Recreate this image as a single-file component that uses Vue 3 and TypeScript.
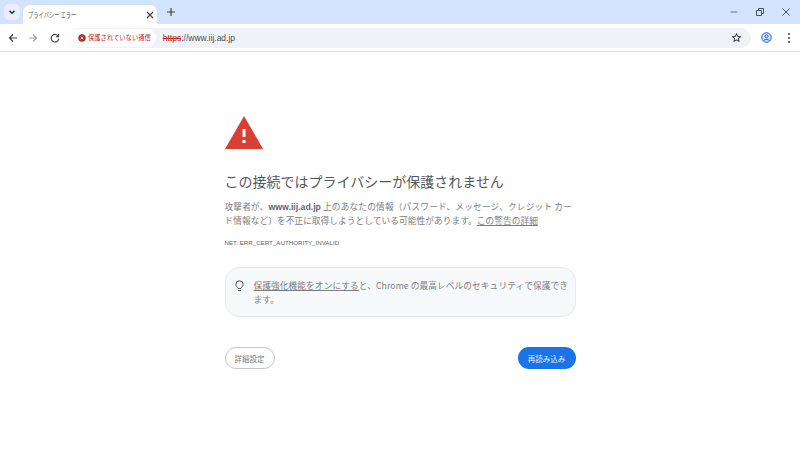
<script setup lang="ts">
const title = 'プライバシー エラー'
const url = 'www.iij.ad.jp'
</script>

<template>
  <div class="window">
    <header class="tabstrip">
      <button class="tab-search">
        <svg width="8" height="8" viewBox="0 0 8 8"><path d="M1.500 2.800 4 5.300 6.500 2.800" fill="none" stroke="#1f2937" stroke-width="1.300" /></svg>
      </button>
      <div class="tab">
        <span class="tab-title">{{ title }}</span>
        <svg class="tab-close" width="8" height="8" viewBox="0 0 8 8"><path d="M1 1 7 7M7 1 1 7" stroke="#3c4043" stroke-width="1.200" /></svg>
      </div>
      <svg class="new-tab" width="10" height="10" viewBox="0 0 10 10"><path d="M5 1v8M1 5h8" stroke="#3c4043" stroke-width="1.200" /></svg>
      <div class="win-controls">
        <svg width="10" height="10" viewBox="0 0 10 10"><path d="M1.500 5h7" stroke="#6b7280" stroke-width="1" /></svg>
        <svg width="10" height="10" viewBox="0 0 10 10"><path d="M1.500 3.500h5v5h-5zM3.500 3.500v-2h5v5h-2" fill="none" stroke="#4b5563" stroke-width="1" /></svg>
        <svg width="10" height="10" viewBox="0 0 10 10"><path d="M1.500 1.500l7 7M8.500 1.500l-7 7" stroke="#4b5563" stroke-width="1" /></svg>
      </div>
    </header>

    <nav class="toolbar">
      <svg class="nav-icon back" width="10" height="10" viewBox="0 0 10 10"><path d="M9 5H1.500M5 1.500 1.500 5 5 8.500" fill="none" stroke="#3c4043" stroke-width="1.200" /></svg>
      <svg class="nav-icon" width="10" height="10" viewBox="0 0 10 10"><path d="M1 5h7.500M5 1.500 8.500 5 5 8.500" fill="none" stroke="#9aa0a6" stroke-width="1.200" /></svg>
      <svg class="nav-icon" width="10" height="10" viewBox="0 0 10 10"><path d="M8.300 3.300A3.800 3.800 0 1 0 8.800 5.500M8.600 1v2.700H5.900" fill="none" stroke="#3c4043" stroke-width="1.100" /></svg>
      <div class="omnibox">
        <div class="chip">
          <svg width="8" height="8" viewBox="0 0 8 8"><circle cx="4" cy="4" r="3.700" fill="#b3261e" /><path d="M2.600 2.600l2.800 2.800M5.400 2.600 2.600 5.400" stroke="#fff" stroke-width=".9" /></svg>
          <span>保護されていない通信</span>
        </div>
        <div class="url"><s class="scheme">https</s><span class="rest">://{{ url }}</span></div>
        <svg class="star" width="11" height="11" viewBox="0 0 24 24"><path d="M12 3.500l2.600 5.700 6.200.7-4.600 4.200 1.300 6.100L12 17.200l-5.500 3 1.300-6.100-4.600-4.200 6.200-.7z" fill="none" stroke="#3c4043" stroke-width="2.200" stroke-linejoin="round" /></svg>
      </div>
      <svg class="profile" width="11" height="11" viewBox="0 0 12 12"><circle cx="6" cy="6" r="5.200" fill="#d3e3fd" stroke="#0b57d0" stroke-width="1" /><circle cx="6" cy="4.700" r="1.700" fill="none" stroke="#0b57d0" stroke-width="1" /><path d="M2.800 9.400C4 7.700 8 7.700 9.200 9.400" fill="none" stroke="#0b57d0" stroke-width="1" /></svg>
      <svg class="menu" width="4" height="12" viewBox="0 0 4 12"><circle cx="2" cy="2" r="1" fill="#3c4043" /><circle cx="2" cy="6" r="1" fill="#3c4043" /><circle cx="2" cy="10" r="1" fill="#3c4043" /></svg>
    </nav>

    <main class="page">
      <div class="content">
        <svg class="warn" width="38" height="33" viewBox="0 0 38 33">
          <path d="M19 0 38 33H0z" fill="#d93f33" />
          <rect x="17.500" y="13" width="3" height="8" fill="#fff" />
          <rect x="17.500" y="24" width="3" height="3" fill="#fff" />
        </svg>
        <h1>この接続ではプライバシーが保護されません</h1>
        <p class="body"><span class="first">攻撃者が、<b>www.iij.ad.jp</b> 上のあなたの情報（パスワード、メッセージ、クレジット カー</span><br />ド情報など）を不正に取得しようとしている可能性があります。<u>この警告の詳細</u></p>
        <p class="code">NET::ERR_CERT_AUTHORITY_INVALID</p>
        <div class="promo">
          <svg class="bulb" width="9" height="12" viewBox="0 0 10 13"><path d="M3.300 9.200C3.200 8 1 7.200 1 4.700a4 4 0 0 1 8 0c0 2.500-2.200 3.300-2.300 4.500z" fill="none" stroke="#3c4043" stroke-width="1" /><path d="M3.300 11.500h3.400" stroke="#3c4043" stroke-width="1" /></svg>
          <p><u>保護強化機能をオンにする</u>と、Chrome の最高レベルのセキュリティで保護できます。</p>
        </div>
        <div class="actions">
          <button class="btn-outline">詳細設定</button>
          <button class="btn-primary">再読み込み</button>
        </div>
      </div>
    </main>
  </div>
</template>

<style>
html, body { margin: 0; background: #fff; }
</style>

<style scoped>
.window { width: 800px; height: 449px; display: flex; flex-direction: column; overflow: hidden; font-family: "Noto Sans CJK JP", "Liberation Sans", sans-serif; background: #fff; }
.tabstrip { height: 24px; flex: none; background: #d3e3fd; display: flex; align-items: flex-end; padding-left: 4px; box-sizing: border-box; }
.tab-search { width: 16px; height: 16px; margin: 0 3px 4px 0; padding: 0; border: 0; border-radius: 5px; background: #e8effb; display: flex; align-items: center; justify-content: center; }
.tab { width: 134px; height: 19px; box-sizing: border-box; padding: 0 3px 0 5px; background: #fff; border-radius: 7px 7px 0 0; display: flex; align-items: center; justify-content: space-between; }
.tab-title { display: inline-block; font-size: 7.500px; color: #55585c; white-space: nowrap; transform: scaleX(.7); transform-origin: left center; }
.new-tab { margin: 0 0 7px 9px; }
.win-controls { margin-left: auto; align-self: stretch; display: flex; align-items: center; gap: 16px; padding: 0 9px 0 0; height: 24px; }
.toolbar { height: 28px; flex: none; box-sizing: border-box; background: #fff; border-bottom: 1px solid #dfe1e5; display: flex; align-items: center; padding: 0 9px 0 8px; }
.nav-icon { margin-right: 12px; }
.nav-icon.back { margin-right: 10px; }
.omnibox { flex: 1; height: 20px; margin: 0 10px 0 -3px; background: #eff2f7; border-radius: 10px; display: flex; align-items: center; }
.chip { height: 18px; display: flex; align-items: center; gap: 2px; padding: 0 5px 0 9px; background: #fff; border-radius: 9px; font-size: 6.300px; color: #b3261e; margin: 0 7px 0 0; }
.url { font-size: 8.500px; font-family: "Liberation Sans", sans-serif; color: #3c4043; }
.scheme { color: #c5221f; }
.rest { color: #4a4d51; }
.star { margin: 0 9px 0 auto; }
.profile { margin-right: 15px; }
.page { flex: 1; display: flex; justify-content: center; padding-top: 64px; min-height: 0; }
.content { width: 351px; display: flex; flex-direction: column; align-items: stretch; }
.warn { display: block; }
h1 { margin: 22px 0 0; font-size: 14px; line-height: 20px; font-weight: 400; color: #55585c; }
.body { margin: 9px 0 0; font-size: 8.700px; line-height: 14px; color: #7a7d82; letter-spacing: .05px; }
.body .first { letter-spacing: .16px; }
.body b { font-family: "Liberation Sans", sans-serif; color: #5f6368; line-height: 1; letter-spacing: 0; }
.code { margin: 10px 0 0; font-size: 6.200px; line-height: 10px; color: #5f6368; font-family: "Liberation Sans", sans-serif; }
.promo { margin-top: 19px; height: 50px; box-sizing: border-box; display: flex; gap: 10px; padding: 11px 5px 0 9px; background: #f7f8f9; border: 1px solid #e8eaed; border-radius: 14px; }
.promo p { margin: 0; font-size: 8.700px; line-height: 14px; color: #7a7d82; letter-spacing: .08px; }
.bulb { flex: none; margin-top: 1px; }
.actions { margin-top: 30px; display: flex; justify-content: space-between; }
button { font-family: inherit; cursor: pointer; }
.actions button { height: 22px; border-radius: 11px; font-size: 7.500px; padding: 0; }
.btn-outline { width: 50px; background: #fff; border: 1px solid #c4c7c5; color: #7a7d82; }
.btn-primary { width: 58px; background: #1a73e8; border: 0; color: #e8f0fe; }
</style>
